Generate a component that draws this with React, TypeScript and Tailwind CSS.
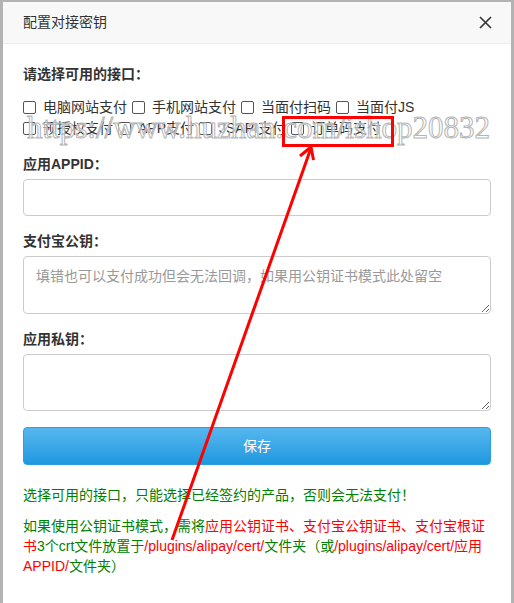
const payTypes = [
  "电脑网站支付",
  "手机网站支付",
  "当面付扫码",
  "当面付JS",
  "预授权支付",
  "APP支付",
  "JSAPI支付",
  "订单码支付",
];

const Field = ({ label, children }: { label: string; children: React.ReactNode }) => (
  <div>
    <div className="font-bold leading-[21px]">{label}</div>
    <div className="mt-[4px]">{children}</div>
  </div>
);

export default function App() {
  return (
    <div className="relative w-[514px] h-[603px] overflow-hidden bg-[#b3b3b3] pt-[2px] px-[3px] text-[14px] text-[#333] font-['Liberation_Sans','Noto_Sans_CJK_SC',sans-serif]">
      <div className="h-full bg-white">
        {/* header */}
        <div className="flex items-center justify-between h-[42px] pl-[20px] pr-[18px] bg-[#f8f8f8] border-b border-[#eee]">
          <span>配置对接密钥</span>
          <svg width="13" height="13" viewBox="0 0 13 13" className="mr-[1px]">
            <path d="M1 1L12 12M12 1L1 12" stroke="#333" strokeWidth="1.6" />
          </svg>
        </div>

        <div className="px-[20px] pt-[20px]">
          <div className="font-bold leading-[21px]">请选择可用的接口：</div>
          <div className="mt-[12px] leading-[21px]">
            {payTypes.map((t) => (
              <label key={t} className="inline-flex items-center mr-[5px] align-top h-[21px]">
                <span className="inline-block w-[13px] h-[13px] border border-[#555] rounded-[2px] bg-white" />
                <span className="ml-[7px]">{t}</span>
              </label>
            ))}
          </div>

          <div className="mt-[15px] flex flex-col gap-[15px]">
            <Field label="应用APPID：">
              <input className="block w-full h-[37px] border border-[#ccc] rounded-[4px] px-[12px] outline-none" />
            </Field>
            <Field label="支付宝公钥：">
              <textarea
                placeholder="填错也可以支付成功但会无法回调，如果用公钥证书模式此处留空"
                className="block w-full h-[58px] border border-[#ccc] rounded-[4px] px-[12px] py-[9px] leading-[20px] outline-none resize-y placeholder:text-[#999]"
              />
            </Field>
            <Field label="应用私钥：">
              <textarea className="block w-full h-[57px] border border-[#ccc] rounded-[4px] px-[12px] py-[9px] leading-[20px] outline-none resize-y" />
            </Field>
          </div>

          <button className="mt-[16px] w-full h-[38px] rounded-[4px] border border-[#2b9fe2] bg-gradient-to-b from-[#55b7ed] to-[#1c98e0] text-white">
            保存
          </button>

          <p className="mt-[20px] leading-[20px] text-[#008000]">选择可用的接口，只能选择已经签约的产品，否则会无法支付！</p>
          <p className="mt-[11px] leading-[20px] text-[#008000]">
            如果使用公钥证书模式，需将<span className="text-[#ff0000]">应用公钥证书、支付宝公钥证书、支付宝根证书</span>3个crt文件放置于
            <span className="text-[#ff0000]">/plugins/alipay/cert/</span>文件夹（或
            <span className="text-[#ff0000]">/plugins/alipay/cert/应用APPID/</span>文件夹）
          </p>
        </div>
      </div>

      {/* watermark */}
      <div className="absolute left-[27px] top-[112px] pointer-events-none whitespace-nowrap text-[31px] leading-none text-white/60 [-webkit-text-stroke:1px_#b5b5b5] font-['Liberation_Serif',serif]">
        https://www.huzhan.com/ishop20832
      </div>

      {/* annotation */}
      <svg className="absolute left-0 top-0 pointer-events-none" width="514" height="603" viewBox="0 0 514 603">
        <rect x="283.5" y="117.5" width="109" height="28" fill="none" stroke="#ff0000" strokeWidth="3" />
        <path d="M172 540L311 148" stroke="#ff0000" strokeWidth="3" fill="none" />
        <path d="M300 156L311 147L313.5 160" stroke="#ff0000" strokeWidth="3" fill="none" strokeLinejoin="round" />
      </svg>
    </div>
  );
}
